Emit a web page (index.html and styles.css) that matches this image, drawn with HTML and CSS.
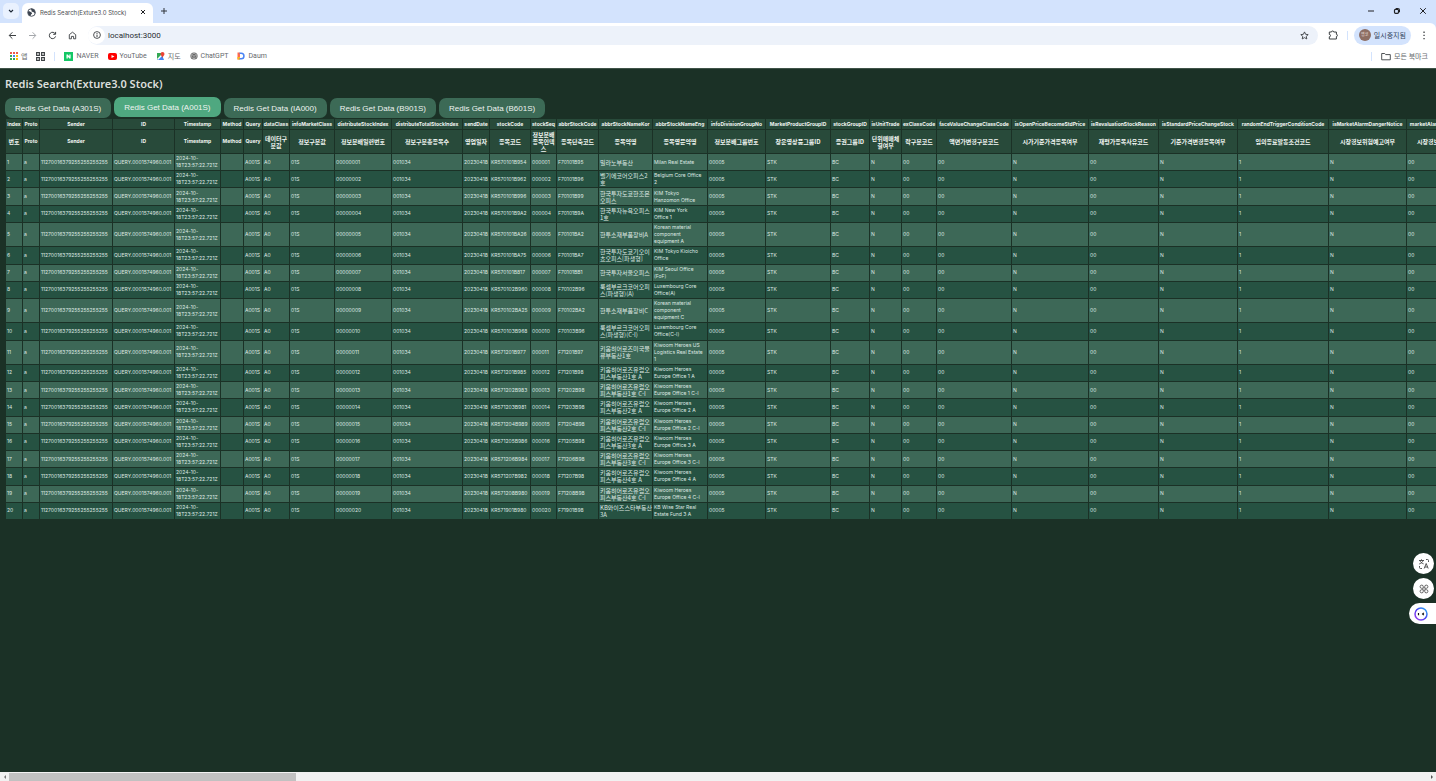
FILE: index.html
```html
<!DOCTYPE html>
<html lang="ko">
<head>
<meta charset="utf-8">
<title>Redis Search(Exture3.0 Stock)</title>
<link rel="stylesheet" href="styles.css">
</head>
<body>
<div class="window">
  <header class="chrome">
    <div class="tabstrip">
      <button class="tab-search" aria-label="탭 검색"><svg width="6" height="6" viewBox="0 0 6 6"><path d="M1 2l2 2 2-2" fill="none" stroke="#1f2937" stroke-width="1.1"/></svg></button>
      <div class="tab">
        <svg width="9" height="9" viewBox="0 0 18 18"><circle cx="9" cy="9" r="7.6" fill="#fff" stroke="#3c4450" stroke-width="1.8"/><path d="M2 7c3-1 5 1 7 2s1 3-1 4l-1 3C4 15 1 12 2 7zM8 1c3 0 7 2 8 6l1 4c-2 0-3-3-5-3s-4-2-3-3-2-2-1-4z" fill="#3c4450"/></svg>
        <span class="tab-title">Redis Search(Exture3.0 Stock)</span>
        <button class="plain" aria-label="탭 닫기"><svg width="6" height="6" viewBox="0 0 6 6"><path d="M1 1l4 4M5 1L1 5" stroke="#202124" stroke-width="1"/></svg></button>
      </div>
      <button class="plain new-tab" aria-label="새 탭"><svg width="8" height="8" viewBox="0 0 8 8"><path d="M4 1v6M1 4h6" stroke="#30343b" stroke-width="1"/></svg></button>
      <div class="window-controls">
        <button class="plain" aria-label="최소화"><svg width="8" height="8" viewBox="0 0 8 8"><path d="M1 4h6" stroke="#202124" stroke-width="1"/></svg></button>
        <button class="plain" aria-label="이전 크기로"><svg width="8" height="8" viewBox="0 0 8 8"><path d="M3 2V1.5h2.5a1 1 0 0 1 1 1V5H6" fill="none" stroke="#202124"/><rect x="1.5" y="2.3" width="4" height="4" rx="1" fill="none" stroke="#202124" stroke-width="1.2"/></svg></button>
        <button class="plain" aria-label="닫기"><svg width="8" height="8" viewBox="0 0 8 8"><path d="M1.2 1.2l5.6 5.6M6.8 1.2L1.2 6.8" stroke="#202124" stroke-width="1"/></svg></button>
      </div>
    </div>
    <div class="toolbar">
      <nav class="nav-buttons">
        <button class="plain" aria-label="뒤로"><svg width="9" height="9" viewBox="0 0 9 9"><path d="M8 4.5H1.3M4.4 1.3L1.2 4.5l3.2 3.2" fill="none" stroke="#3c4043" stroke-width="1"/></svg></button>
        <button class="plain" aria-label="앞으로"><svg width="9" height="9" viewBox="0 0 9 9"><path d="M1 4.5h6.7M4.6 1.3l3.2 3.2-3.2 3.2" fill="none" stroke="#a4a7ab" stroke-width="1"/></svg></button>
        <button class="plain" aria-label="새로고침"><svg width="9" height="9" viewBox="0 0 9 9"><path d="M7.4 3A3.2 3.2 0 1 0 7.6 5.4M7.6.9v2.4H5.2" fill="none" stroke="#3c4043" stroke-width="1"/></svg></button>
        <button class="plain" aria-label="홈"><svg width="9" height="9" viewBox="0 0 9 9"><path d="M1.3 3.7L4.5 1.2l3.2 2.5v4.1H5.6V5.4H3.4v2.4H1.3z" fill="none" stroke="#3c4043" stroke-width=".9"/></svg></button>
      </nav>
      <div class="omnibox">
        <span class="site-info"><svg width="8" height="8" viewBox="0 0 8 8"><circle cx="4" cy="4" r="3.4" fill="none" stroke="#3c4043" stroke-width=".9"/><path d="M4 3.6V6M4 2v.9" stroke="#3c4043"/></svg></span>
        <input class="url" type="text" value="localhost:3000" aria-label="주소">
        <button class="plain" aria-label="북마크 추가"><svg width="9" height="9" viewBox="0 0 18 18"><path d="M9 1.8l2.2 4.8 5.2.6-3.900 3.500 1.100 5.200L9 13.300l-4.600 2.600 1.100-5.200L1.600 7.200l5.200-.6z" fill="none" stroke="#3c4043" stroke-width="1.800"/></svg></button>
      </div>
      <button class="plain" aria-label="확장 프로그램"><svg width="10" height="10" viewBox="0 0 10 10"><path d="M1.300 2h2.200a1.100 1 0 0 1 2.200 0h2.700v2.300a1 1.100 0 0 1 0 2.200v2.500H1.300V6.800a1.200 1.200 0 0 0 0-2.400z" fill="none" stroke="#3c4043" stroke-width="1"/></svg></button>
      <span class="divider"></span>
      <button class="profile"><span class="avatar">앱코</span>일시중지됨</button>
      <button class="plain" aria-label="메뉴"><svg width="4" height="9" viewBox="0 0 4 9"><path d="M1.400.6h1.300v1.300H1.400zM1.400 3.800h1.300v1.300H1.400zM1.400 7h1.300v1.300H1.400z" fill="#3c4043"/></svg></button>
    </div>
    <nav class="bookmarks">
      <a href="#"><svg width="8" height="8" viewBox="0 0 8 8"><path d="M0 0h2v2H0zM3 0h2v2H3zM6 0h2v2H6z" fill="#ea5a4d"/><path d="M0 3h2v2H0z" fill="#34a853"/><path d="M3 3h2v2H3z" fill="#4285f4"/><path d="M6 3h2v2H6z" fill="#fbbc04"/><path d="M0 6h2v2H0zM3 6h2v2H3z" fill="#34a853"/><path d="M6 6h2v2H6z" fill="#fbbc04"/></svg>앱</a>
      <a href="#" aria-label="탭 그룹"><svg width="9" height="9" viewBox="0 0 9 9"><path d="M.6.6h2.800v2.800H.6zM5.600.6h2.800v2.800H5.600zM.6 5.600h2.800v2.800H.6zM5.600 5.600h2.800v2.800H5.600z" fill="none" stroke="#3c4043" stroke-width="1.100"/></svg></a>
      <span class="divider"></span>
      <a href="#"><svg width="9" height="9" viewBox="0 0 9 9"><path d="M0 0h9v9H0z" fill="#14c765"/><path d="M2.500 2.500h1.300l1.500 2v-2h1.300v4H5.300l-1.500-2v2H2.500z" fill="#fff"/></svg>NAVER</a>
      <a href="#"><svg width="9" height="9" viewBox="0 0 9 9"><rect y="1" width="9" height="7" rx="2" fill="#f00"/><path d="M3.500 3l3 1.500-3 1.500z" fill="#fff"/></svg>YouTube</a>
      <a href="#"><svg width="9" height="9" viewBox="0 0 9 9"><path d="M1 1h6v7H1z" fill="#34a853"/><path d="M1 8l5-5 2 5z" fill="#4285f4"/><path d="M1 7l5-5 1 1-5 5z" fill="#fff"/><path d="M6.500 0a2 2 0 0 1 2 2c0 1.500-2 2.500-2 4 0-1.500-2-2.500-2-4a2 2 0 0 1 2-2z" fill="#ea4335"/></svg>지도</a>
      <a href="#"><svg width="8" height="8" viewBox="0 0 8 8"><circle cx="4" cy="4" r="3.600" fill="#666"/><path d="M4 1.200l2.400 1.400v2.800L4 6.800 1.600 5.400V2.600zM1.600 2.600L4 4l2.400-1.400M4 4v2.800" fill="none" stroke="#ddd" stroke-width=".5"/></svg>ChatGPT</a>
      <a href="#"><svg width="8" height="8" viewBox="0 0 8 8"><path d="M.5.5H3v7H.5z" fill="#ff6a4d"/><path d="M.5 5H3v2.500H.5z" fill="#fbb917"/><path d="M2.500.5h1.700A3.500 3.500 0 0 1 7.700 4 3.500 3.500 0 0 1 4.200 7.500H2.500V6h1.700a2 2 0 0 0 0-4H2.500z" fill="#4a84f5"/></svg>Daum</a>
      <span class="spacer"></span>
      <span class="divider"></span>
      <a href="#"><svg width="10" height="9" viewBox="0 0 10 9"><path d="M.7 1.500h3L4.700 2.600h4.600v5.200H.7z" fill="none" stroke="#3c4043" stroke-width=".9"/></svg>모든 북마크</a>
    </nav>
  </header>

  <main class="page">
    <h1>Redis Search(Exture3.0 Stock)</h1>
    <div class="queries">
      <button>Redis Get Data (A301S)</button>
      <button class="active">Redis Get Data (A001S)</button>
      <button>Redis Get Data (IA000)</button>
      <button>Redis Get Data (B901S)</button>
      <button>Redis Get Data (B601S)</button>
    </div>
    <table class="grid">
      <colgroup id="cols"></colgroup>
      <thead id="head"></thead>
      <tbody id="rows"></tbody>
    </table>
  </main>

  <div class="scrollbar">
    <span class="arrow left"></span>
    <span class="thumb"></span>
    <span class="arrow right"></span>
  </div>

  <aside class="floating">
    <button class="round" aria-label="번역"><svg width="12" height="12" viewBox="0 0 12 12"><g fill="none" stroke="#444" stroke-width=".9"><path d="M1 2.500h5M3.500 1.300v1.200M5 2.500C4.600 4.200 3 5.400 1.200 6M2 2.500c.4 1.600 1.800 2.900 3.600 3.400M6.200 10.500l2-5 2 5M6.900 9h2.700M8 1.500h1.500a1 1 0 0 1 1 1V4M1.500 8v1.500a1 1 0 0 0 1 1H4"/></g></svg></button>
    <button class="round" aria-label="앱 메뉴"><svg width="10" height="10" viewBox="0 0 10 10"><g fill="none" stroke="#555" stroke-width=".9"><path d="M4.300 4.300H2.600a1.600 1.600 0 1 1 1.700-1.600zM5.700 4.300h1.700a1.600 1.600 0 1 0-1.700-1.600zM4.300 5.700H2.600a1.600 1.600 0 1 0 1.700 1.600zM5.700 5.700h1.700a1.600 1.600 0 1 1-1.700 1.600z"/></g></svg></button>
    <button class="pill" aria-label="도우미"><svg width="14" height="14" viewBox="0 0 14 14"><defs><linearGradient id="ring" x1="0" y1="1" x2="1" y2="0"><stop offset="0" stop-color="#a13df0"/><stop offset=".5" stop-color="#4b3df0"/><stop offset="1" stop-color="#25b8f5"/></linearGradient></defs><circle cx="7" cy="7" r="6" fill="#fff" stroke="url(#ring)" stroke-width="1.500"/><path d="M4.500 6v2.200M9.800 5.900L8.600 7l1.200 1.200" fill="none" stroke="#111" stroke-width="1.200"/></svg></button>
  </aside>
</div>
<script src="table.js"></script>
</body>
</html>
```
FILE: styles.css
```css
* { box-sizing: border-box; }

body {
  margin: 0;
  background: #1b3126;
  font-family: "Noto Sans", "Noto Sans CJK KR", sans-serif;
}

button { font: inherit; border: 0; padding: 0; }
svg { display: block; flex: none; }

.window {
  min-height: 100vh;
  display: flex;
  flex-direction: column;
  overflow: hidden;
}

.plain {
  background: none;
  display: flex;
  align-items: center;
  justify-content: center;
}

/* Browser frame */
.chrome { background: #d3e3fd; color: #4a4d51; font-size: 7px; }

.tabstrip {
  height: 23px;
  display: flex;
  align-items: flex-end;
  padding: 0 9px 0 3px;
}

.tab-search {
  width: 16px;
  height: 16px;
  margin-bottom: 4px;
  border-radius: 5px;
  background: #e9f1fe;
  display: grid;
  place-items: center;
}

.tab {
  width: 131px;
  height: 20px;
  margin-left: 3px;
  padding: 0 7px 2px 5px;
  display: flex;
  align-items: center;
  gap: 4px;
  background: #fff;
  border-radius: 6px 6px 0 0;
}

.tab-title { flex: 1; white-space: nowrap; font: 6px Inter, sans-serif; }
.new-tab { margin: 0 0 8px 7px; }

.window-controls {
  margin: 0 0 8px auto;
  display: flex;
  gap: 18px;
}

.toolbar {
  height: 24px;
  padding: 0 10px 0 8px;
  display: flex;
  align-items: center;
  background: #fff;
  border-radius: 0 6px 0 0;
}

.nav-buttons { display: flex; gap: 11px; }

.omnibox {
  flex: 1;
  height: 19px;
  margin: 0 10px 0 11px;
  padding: 0 9px 0 0;
  display: flex;
  align-items: center;
  background: #edf2fa;
  border-radius: 10px;
}

.site-info {
  width: 17px;
  height: 17px;
  border-radius: 50%;
  background: #fff;
  display: grid;
  place-items: center;
}

.url {
  flex: 1;
  border: 0;
  padding: 0 3px;
  background: none;
  outline: none;
  color: #2b2e33;
  font: 8px Roboto, sans-serif;
}

.divider { width: 1px; height: 9px; background: #d3e3fd; }
.toolbar .divider { margin: 0 6px 0 9px; }

.profile {
  height: 19px;
  margin-right: 11px;
  padding: 0 5px 0 5px;
  display: flex;
  align-items: center;
  gap: 3px;
  border-radius: 10px;
  background: #d3e3fd;
  color: #33455e;
  font-size: 7px;
}

.avatar {
  width: 12px;
  height: 12px;
  border-radius: 50%;
  background: #8d6e63;
  color: #e5dcd8;
  font-size: 4px;
  line-height: 12px;
  text-align: center;
}

.bookmarks {
  height: 21px;
  padding: 0 8px 3px 10px;
  display: flex;
  align-items: center;
  gap: 9px;
  background: #fff;
  font-family: Roboto, "Noto Sans CJK KR", sans-serif;
}

.bookmarks a {
  display: flex;
  align-items: center;
  gap: 3px;
  color: #66696d;
  text-decoration: none;
  white-space: nowrap;
}

.spacer { flex: 1; }

/* Page */
.page {
  flex: 1;
  padding: 7px 0 0 5px;
  border-top: 1px solid #3f5348;
}

h1 {
  margin: 0;
  color: #dcdfdc;
  font: 600 11px/15px "Noto Sans", sans-serif;
}

.queries { display: flex; gap: 3px; padding-top: 7px; }

.queries button {
  height: 20px;
  padding: 0 10px;
  border-radius: 7px;
  background: #3c6a56;
  color: #eef3f0;
  font: 8px "Liberation Sans", sans-serif;
}

.queries .active { background: #4fa880; transform: translateY(-1px); }

.grid {
  width: 1467px;
  height: 402px;
  table-layout: fixed;
  border-spacing: 1px;
  color: #dfe8e3;
  font: 5px/7px Inter, "Noto Sans CJK KR", sans-serif;
}

.grid th, .grid td {
  padding: 1px 0 1px 1px;
  white-space: normal;
}

.grid th {
  padding: 0;
  background: #284a3a;
  color: #f2f6f3;
  font-weight: 700;
  text-align: center;
}

.grid .names th { height: 10px; white-space: nowrap; }
.grid .labels th { height: 23px; }
.grid .ko { font: 6px/7px "Noto Sans CJK KR", sans-serif; }
.grid th.ko { font-weight: 700; }
.grid tbody tr:nth-child(odd) { background: #3d6857; }
.grid tbody tr:nth-child(even) { background: #265242; }

/* Horizontal scrollbar */
.scrollbar {
  height: 9px;
  display: flex;
  align-items: center;
  background: #f1f1f1;
}

.thumb { width: 20%; height: 8px; margin-right: auto; background: #c1c1c1; }
.arrow { width: 9px; display: grid; place-items: center; }

.arrow::before {
  content: "";
  border: 2px solid transparent;
}

.arrow.left::before { border-right-color: #777; border-left-width: 0; }
.arrow.right::before { border-left-color: #555; border-right-width: 0; }

/* Floating helper buttons */
.floating {
  position: fixed;
  right: 0;
  bottom: 157px;
  display: flex;
  flex-direction: column;
  align-items: flex-end;
  gap: 4px;
}

.round {
  width: 21px;
  height: 21px;
  margin-right: 2px;
  border-radius: 50%;
  background: #fff;
  display: grid;
  place-items: center;
}

.pill {
  width: 27px;
  height: 21px;
  padding-left: 5px;
  border-radius: 11px 0 0 11px;
  background: #fff;
}
```
FILE: table.js
```js
const columns = [
  [16, "Index", "번호"], [16, "Proto", "Proto"], [72, "Sender", "Sender"], [61, "ID", "ID"],
  [45, "Timestamp", "Timestamp"], [22, "Method", "Method"], [18, "Query", "Query"],
  [26, "dataClass", "데이터구분값"], [44, "infoMarketClass", "정보구분값"],
  [56, "distributeStockIndex", "정보분배일련번호"], [70, "distributeTotalStockIndex", "정보구분총종목수"],
  [26, "sendDate", "영업일자"], [40, "stockCode", "종목코드"], [25, "stockSeq", "정보분배종목인덱스"],
  [41, "abbrStockCode", "종목단축코드"], [53, "abbrStockNameKor", "종목약명"],
  [54, "abbrStockNameEng", "종목영문약명"], [57, "infoDivisionGroupNo", "정보분배그룹번호"],
  [64, "MarketProductGroupID", "장운영상품그룹ID"], [38, "stockGroupID", "증권그룹ID"],
  [31, "isUnitTrade", "단위매매체결여부"], [34, "exClassCode", "락구분코드"],
  [74, "faceValueChangeClassCode", "액면가변경구분코드"], [76, "isOpenPriceBecomeStdPrice", "시가기준가격종목여부"],
  [69, "isRevaluationStockReason", "재평가종목사유코드"], [78, "isStandardPriceChangeStock", "기준가격변경종목여부"],
  [90, "randomEndTriggerConditionCode", "임의종료발동조건코드"], [77, "isMarketAlarmDangerNotice", "시장경보위험예고여부"],
  [64, "marketAlarmClassCode", "시장경보구분코드"]
];

const stocks = [
  ["KR570101B954", "F70101B95", "밀라노부동산", "Milan Real Estate"],
  ["KR570101B962", "F70101B96", "벨기에코어오피스2호", "Belgium Core Office<br>2"],
  ["KR570101B996", "F70101B99", "한국투자도쿄한조몬오피스", "KIM Tokyo<br>Hanzomon Office"],
  ["KR570101B9A2", "F70101B9A", "한국투자뉴욕오피스1호", "KIM New York<br>Office 1"],
  ["KR570101BA26", "F70101BA2", "한투소재부품장비A", "Korean material component equipment A"],
  ["KR570101BA75", "F70101BA7", "한국투자도쿄기오이쵸오피스[파생형]", "KIM Tokyo Kioicho Office"],
  ["KR570101B817", "F70101BB1", "한국투자서울오피스", "KIM Seoul Office (FoF)"],
  ["KR570102B960", "F70102B96", "룩셈부르크코어오피스(파생형)(A)", "Luxembourg Core Office(A)"],
  ["KR570102BA25", "F70102BA2", "한투소재부품장비C", "Korean material component equipment C"],
  ["KR570103B968", "F70103B96", "룩셈부르크코어오피스(파생형)(C-I)", "Luxembourg Core Office(C-I)"],
  ["KR571201B977", "F71201B97", "키움히어로즈미국물류부동산1호", "Kiwoom Heroes US Logistics Real Estate<br>1"],
  ["KR571201B985", "F71201B98", "키움히어로즈유럽오피스부동산1호 A", "Kiwoom Heroes Europe Office 1 A"],
  ["KR571202B983", "F71202B98", "키움히어로즈유럽오피스부동산1호 C-I", "Kiwoom Heroes Europe Office 1 C-I"],
  ["KR571203B981", "F71203B98", "키움히어로즈유럽오피스부동산2호 A", "Kiwoom Heroes Europe Office 2 A"],
  ["KR571204B989", "F71204B98", "키움히어로즈유럽오피스부동산2호 C-I", "Kiwoom Heroes Europe Office 2 C-I"],
  ["KR571205B986", "F71205B98", "키움히어로즈유럽오피스부동산3호 A", "Kiwoom Heroes Europe Office 3 A"],
  ["KR571206B984", "F71206B98", "키움히어로즈유럽오피스부동산3호 C-I", "Kiwoom Heroes Europe Office 3 C-I"],
  ["KR571207B982", "F71207B98", "키움히어로즈유럽오피스부동산4호 A", "Kiwoom Heroes Europe Office 4 A"],
  ["KR571208B980", "F71208B98", "키움히어로즈유럽오피스부동산4호 C-I", "Kiwoom Heroes Europe Office 4 C-I"],
  ["KR571901B980", "F71901B98", "KB와이즈스타부동산3A", "KB Wise Star Real Estate Fund 3 A"]
];

const cell = (tag, text) =>
  `<${tag}${/[가-힣]/.test(text) ? ' class="ko"' : ""}>${text}</${tag}>`;

document.getElementById("cols").innerHTML =
  columns.map(c => `<col style="width:${c[0]}px">`).join("");

document.getElementById("head").innerHTML =
  `<tr class="names">${columns.map(c => cell("th", c[1])).join("")}</tr>` +
  `<tr class="labels">${columns.map(c => cell("th", c[2])).join("")}</tr>`;

document.getElementById("rows").innerHTML = stocks.map(([code, abbr, kor, eng], i) => {
  const n = String(i + 1);
  const values = [
    n, "a", "11270016379255255255255", "QUERY.0001574960.001", "2024-10-<br>18T23:57:22.721Z",
    "", "A001S", "A0", "01S", n.padStart(8, "0"), "001034", "20230418", code,
    n.padStart(6, "0"), abbr, kor, eng, "00005", "STK", "BC", "N", "00", "00", "N", "00", "N", "1", "N", "00"
  ];
  return `<tr>${values.map(v => cell("td", v)).join("")}</tr>`;
}).join("");
```
